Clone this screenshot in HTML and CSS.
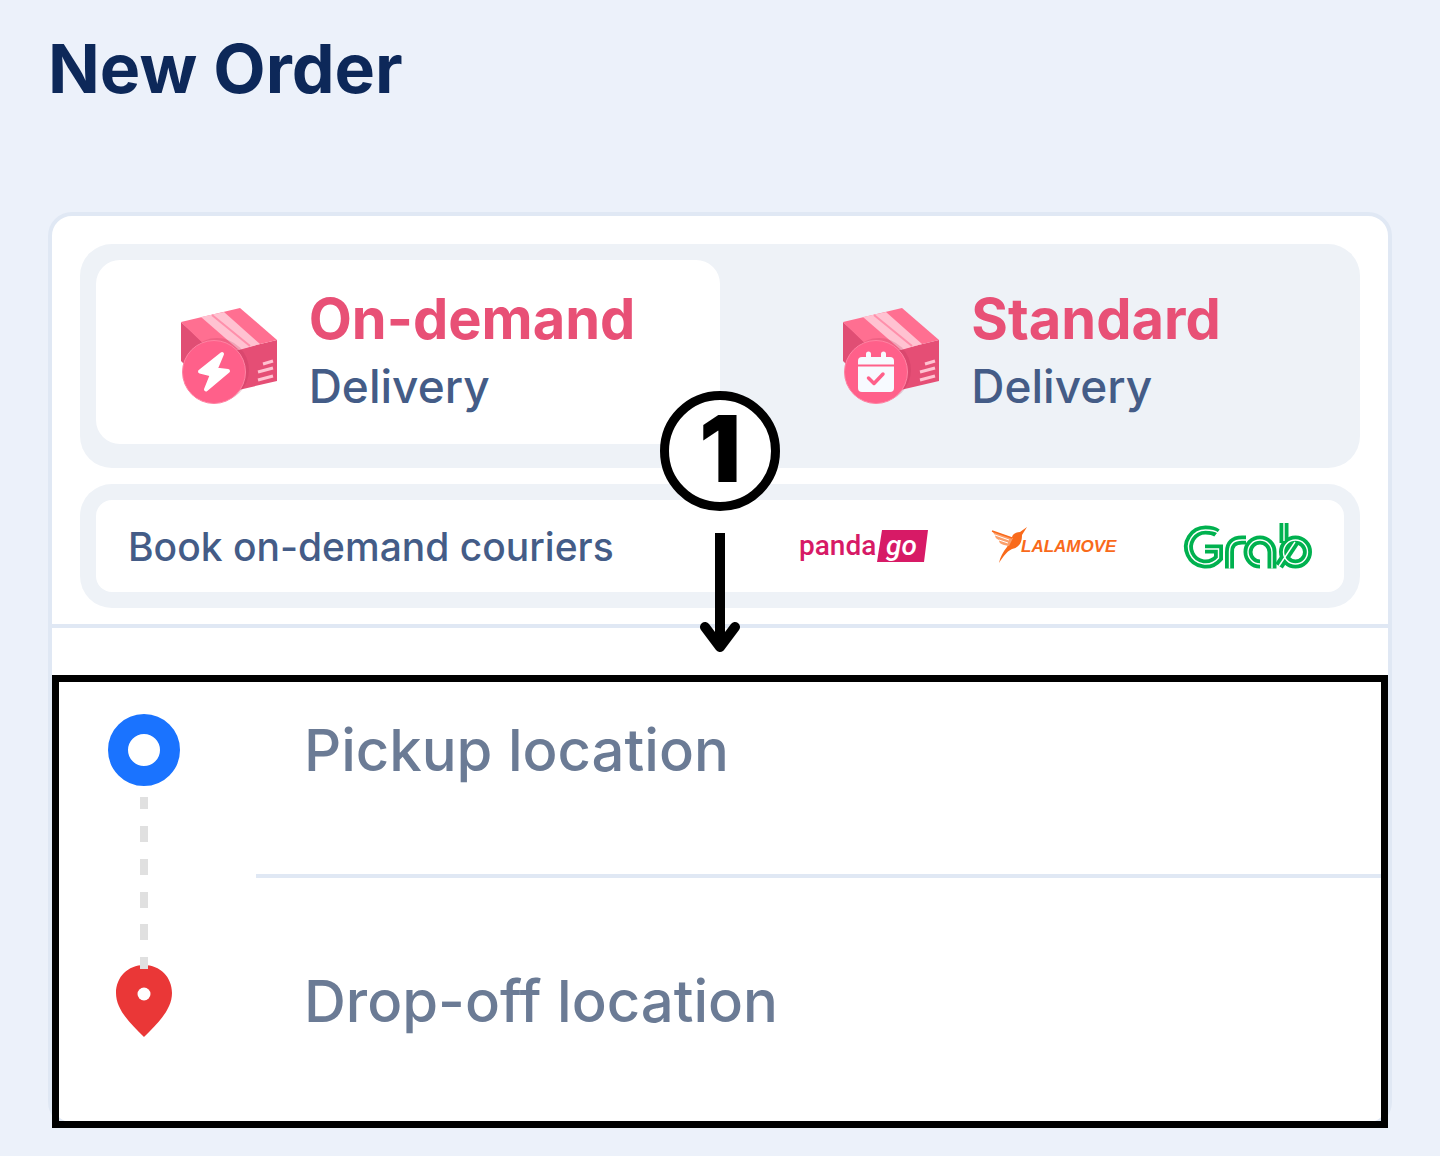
FILE: index.html
```html
<!DOCTYPE html>
<html lang="en">
<head>
  <meta charset="UTF-8" />
  <meta name="viewport" content="width=device-width, initial-scale=1.0"/>
  <title>New Order</title>
  <link rel="stylesheet" href="styles.css">
</head>
<body>

  <!-- shared parcel drawing -->
  <svg class="defs" aria-hidden="true">
    <symbol id="parcel" viewBox="0 0 96 96">
      <path fill="#e04e74" d="M0 14 36 47V88L0 53Z"/>
      <path fill="#e54e75" d="M34 47 96 32V73L36 87Z"/>
      <path fill="#ff6f91" d="M0 14 59 0 96 32 34 47Z"/>
      <path fill="#ffc2d1" d="M20 9 43 4 79 36 58 42Z"/>
      <path stroke="#ff8fab" stroke-width="2" d="M31 7 69 38"/>
      <path stroke="#ffc2d1" stroke-width="3" d="M82 56 92 53M77 64 92 60M77 72 92 68"/>
      <circle cx="36" cy="62" r="32" fill="#b83258" opacity=".22"/>
      <circle cx="33" cy="64" r="31.5" fill="#ff608a" stroke="#ff83a3"/>
    </symbol>
  </svg>

  <h1>New Order</h1>

  <main class="card">
    <div class="tabs" role="tablist">
      <button type="button" class="tab active" role="tab" aria-selected="true">
        <svg class="tab-icon" viewBox="0 0 96 96" fill="none" aria-hidden="true">
          <use href="#parcel"/>
          <path fill="#fff" stroke="#fff" stroke-width="4" stroke-linejoin="round" d="M41 46 34.500 61.500 47 63 25 81.500 31 66.500 19 63.500Z"/>
        </svg>
        <span class="tab-text">
          <strong>On-demand</strong>
          <span>Delivery</span>
        </span>
      </button>
      <button type="button" class="tab" role="tab" aria-selected="false">
        <svg class="tab-icon" viewBox="0 0 96 96" fill="none" aria-hidden="true">
          <use href="#parcel"/>
          <rect x="15" y="49" width="36" height="35" rx="4" fill="#f7faff"/>
          <path stroke="#f7faff" stroke-width="5" stroke-linecap="round" d="M25.500 46V52M40.500 46V52"/>
          <path stroke="#ff608a" stroke-width="2" d="M15 57.500H51"/>
          <path stroke="#ff608a" stroke-width="3.500" stroke-linecap="round" stroke-linejoin="round" d="M25.500 70 31 75.500 40 66"/>
        </svg>
        <span class="tab-text">
          <strong>Standard</strong>
          <span>Delivery</span>
        </span>
      </button>
    </div>

    <div class="couriers">
      <div class="couriers-inner">
        <p>Book on-demand couriers</p>
        <ul class="logos">
          <li>
            <svg width="128" height="38" viewBox="0 0 128 38" role="img" aria-label="pandago">
              <path fill="#d71a66" d="M82 3H128L124 35H77Z"/>
              <text class="panda" x="-1" y="28">panda</text>
              <text class="go" x="86" y="28">go</text>
            </svg>
          </li>
          <li>
            <svg width="128" height="38" viewBox="0 0 128 38" role="img" aria-label="Lalamove">
              <path fill="#f96a1b" d="M35 0 30 8C30 15 28 20 20 22 14 25 11 30 7 36 8 30 11 25 15 20L20 10C21 6 25 5 28 5Z"/>
              <path fill="#fba06c" d="M0 4 21 11 17 19 12 18C8 17 7 15 7 13 4 12 3 10 3 8Z"/>
              <path stroke="#fff" stroke-width="1" d="M3 8 17 13M7 13 16 16"/>
              <path stroke="#f96a1b" stroke-width="1.500" fill="none" d="M0 4 20 11"/>
              <text class="lala" x="29" y="25">LALAMOVE</text>
            </svg>
          </li>
          <li>
            <svg width="128" height="46" viewBox="0 0 128 46" fill="none" role="img" aria-label="Grab">
              <g stroke="#00b14f" stroke-width="9">
                <path d="M33 10C29 7 26 7 21.500 7A17 17 0 1 0 34.500 35V26H21"/>
                <path d="M45.500 45.500V29Q45.500 17 58 17H62"/>
                <path d="M76 41A12 12 0 1 1 88 29V45.500"/>
                <path d="M100 0V20"/>
                <circle cx="111.500" cy="29" r="12"/>
                <path d="M95 43 111 19"/>
              </g>
              <g stroke="#fff" stroke-width="1.400">
                <path d="M34 10C30 7 26 7 21.500 7A17 17 0 1 0 34.500 35V26H21"/>
                <path d="M45.500 45.500V29Q45.500 17 58 17H62"/>
                <path d="M76 41A12 12 0 1 1 88 29V45.500"/>
                <path d="M100 0V18"/>
                <circle cx="111.500" cy="29" r="12"/>
                <path d="M95 43 111 19"/>
              </g>
            </svg>
          </li>
        </ul>
      </div>
    </div>

    <form class="route">
      <div class="rail" aria-hidden="true">
        <svg width="72" height="72" viewBox="0 0 72 72">
          <circle cx="36" cy="36" r="26" fill="none" stroke="#1a73ff" stroke-width="20"/>
        </svg>
        <svg class="dashes" width="8" height="172" viewBox="0 0 8 172">
          <path stroke="#e0e0e0" stroke-width="8" d="M4 0V12M4 29V45M4 62V78M4 95V111M4 127V143M4 160V172"/>
        </svg>
        <svg class="pin" width="56" height="72" viewBox="0 0 56 72">
          <path fill="#ea3737" d="M28 0C12 0 0 12 0 28 0 45 15 59 28 72 41 59 56 45 56 28 56 12 44 0 28 0Z"/>
          <circle cx="28" cy="29" r="6.500" fill="#fff"/>
        </svg>
      </div>
      <div class="fields">
        <div class="field pickup">
          <input type="text" name="pickup" placeholder="Pickup location" aria-label="Pickup location">
        </div>
        <div class="field dropoff">
          <input type="text" name="dropoff" placeholder="Drop-off location" aria-label="Drop-off location">
        </div>
      </div>
    </form>

    <!-- step marker pointing at the route form -->
    <div class="step">
      <div class="step-number">1</div>
      <svg width="40" height="120" viewBox="0 0 40 120" fill="none" stroke="#000" stroke-width="10" aria-hidden="true">
        <path d="M20 0V112"/>
        <path stroke-linecap="round" stroke-linejoin="round" d="M5 94 20 114 35 94"/>
      </svg>
    </div>
  </main>

</body>
</html>
```
FILE: styles.css
```css
* {
  box-sizing: border-box;
}

body {
  background-color: #ecf1fa;
  font-family: Inter, "Liberation Sans", sans-serif;
  margin: 0;
  padding: 28px 48px;
}

.defs {
  display: block;
  width: 0;
  height: 0;
}

h1 {
  color: #0d2859;
  font-size: 68px;
  line-height: 80px;
  font-weight: 700;
  margin: 0 0 104px;
}

.card {
  position: relative;
  background-color: white;
  border: 4px solid #e0e8f4;
  border-radius: 24px;
  padding-top: 28px;
}

.tabs {
  display: flex;
  margin: 0 28px 16px;
  padding: 16px 16px 24px;
  background-color: #eef2f7;
  border-radius: 32px;
}

.tab {
  flex: 1;
  display: flex;
  align-items: center;
  justify-content: center;
  gap: 32px;
  height: 184px;
  padding: 0;
  border: none;
  border-radius: 24px;
  background: none;
  font-family: inherit;
  text-align: left;
}

.tab.active {
  background-color: white;
}

.tab-icon {
  width: 96px;
  height: 96px;
  margin-top: 8px;
  overflow: visible;
}

.tab-text strong,
.tab-text span {
  display: block;
}

.tab-text strong {
  color: #e85076;
  font-size: 56px;
  line-height: 68px;
  font-weight: 700;
}

.tab-text span {
  color: #445c87;
  font-size: 46px;
  line-height: 66px;
  font-weight: 500;
}

.couriers {
  margin: 0 28px;
  padding: 16px;
  background-color: #eef2f7;
  border-radius: 32px;
}

.couriers-inner {
  display: flex;
  align-items: center;
  justify-content: space-between;
  height: 92px;
  padding: 0 32px;
  background-color: white;
  border-radius: 16px;
}

.couriers p {
  margin: 0;
  color: #445c87;
  font-size: 39px;
  font-weight: 500;
}

.logos {
  display: flex;
  align-items: center;
  gap: 64px;
  margin: 0;
  padding: 0;
  list-style-type: none;
}

.logos svg {
  display: block;
  overflow: visible;
}

.panda,
.go {
  font-family: Roboto, sans-serif;
  font-size: 28px;
  font-weight: 500;
  fill: #d71a66;
}

.go {
  font-style: italic;
  fill: white;
}

.lala {
  font-family: "Liberation Sans", sans-serif;
  font-size: 17px;
  font-weight: bold;
  font-style: italic;
  fill: #f96a1b;
}

.route {
  position: relative;
  display: flex;
  margin: 67px 0 -6px;
  border: 7px solid black;
}

/* line between the couriers and the route */
.route::before {
  content: "";
  position: absolute;
  top: -58px;
  left: -7px;
  right: -7px;
  height: 4px;
  background-color: #e0e8f4;
}

.rail {
  display: flex;
  flex-direction: column;
  align-items: center;
  width: 170px;
  padding-top: 32px;
}

.dashes {
  position: relative;
  z-index: 1;
  margin-top: 11px;
}

.pin {
  margin-top: -4px;
}

.fields {
  flex: 1;
  margin-left: 27px;
}

.field {
  padding: 28px 48px 84px;
}

.field.dropoff {
  padding: 83px 48px 80px;
  border-top: 4px solid #e0e8f4;
}

.field input {
  display: block;
  width: 100%;
  height: 80px;
  padding: 0;
  border: none;
  outline: none;
  background: none;
  color: #445c87;
  font-family: inherit;
  font-size: 58px;
  font-weight: 500;
}

.field input::placeholder {
  color: #6b7b95;
  opacity: 1;
}

.step {
  position: absolute;
  top: 175px;
  left: 50%;
  transform: translateX(-50%);
  display: flex;
  flex-direction: column;
  align-items: center;
  gap: 22px;
}

.step-number {
  width: 120px;
  height: 120px;
  border: 9px solid black;
  border-radius: 50%;
  background-color: white;
  font-size: 92px;
  line-height: 98px;
  font-weight: 900;
  text-align: center;
}
```
